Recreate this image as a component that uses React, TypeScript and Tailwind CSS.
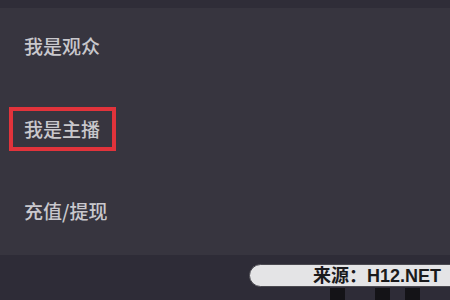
const items = ["我是观众", "我是主播", "充值/提现"];

export default function App() {
  return (
    <div
      className="relative flex h-[300px] w-[450px] flex-col overflow-hidden bg-[#37353f]"
      style={{ fontFamily: '"Noto Sans CJK SC", "Noto Sans", sans-serif' }}
    >
      <div className="h-[8px] bg-[#2f2d38]" />

      <div className="flex flex-1 flex-col items-start">
        <p className="ml-[24px] mt-[28px] text-[19px] font-medium leading-[20px] text-[#c9c8cd]">
          {items[0]}
        </p>
        <div className="ml-[9px] mt-[51px] border-4 border-[#e1333b] py-[8px] pl-[11px] pr-[12px]">
          <p className="text-[19px] font-medium leading-[20px] text-[#c9c8cd]">{items[1]}</p>
        </div>
        <p className="ml-[24px] mt-[50px] text-[19px] font-medium leading-[20px] text-[#c9c8cd]">
          {items[2]}
        </p>
      </div>

      <div className="relative h-[45px] bg-[#2e2c37]">
        {/* watermark */}
        <div className="absolute left-[249px] right-[-12px] top-[9px] flex h-[23px] items-center rounded-full border-[1.5px] border-[#4a4950] bg-[#e4e4e6] pl-[63px]">
          <span
            className="text-[18px] font-bold leading-[20px] text-[#1a1a1c]"
            style={{ fontFamily: '"Liberation Sans", "Noto Sans CJK SC", sans-serif' }}
          >
            来源：H12.NET
          </span>
        </div>
        <div className="absolute left-[330px] top-[33px] h-[12px] w-[15px] bg-[#141317]" />
        <div className="absolute left-[375px] top-[33px] h-[12px] w-[15px] bg-[#141317]" />
        <div className="absolute left-[405px] top-[33px] h-[12px] w-[15px] bg-[#141317]" />
      </div>
    </div>
  );
}
